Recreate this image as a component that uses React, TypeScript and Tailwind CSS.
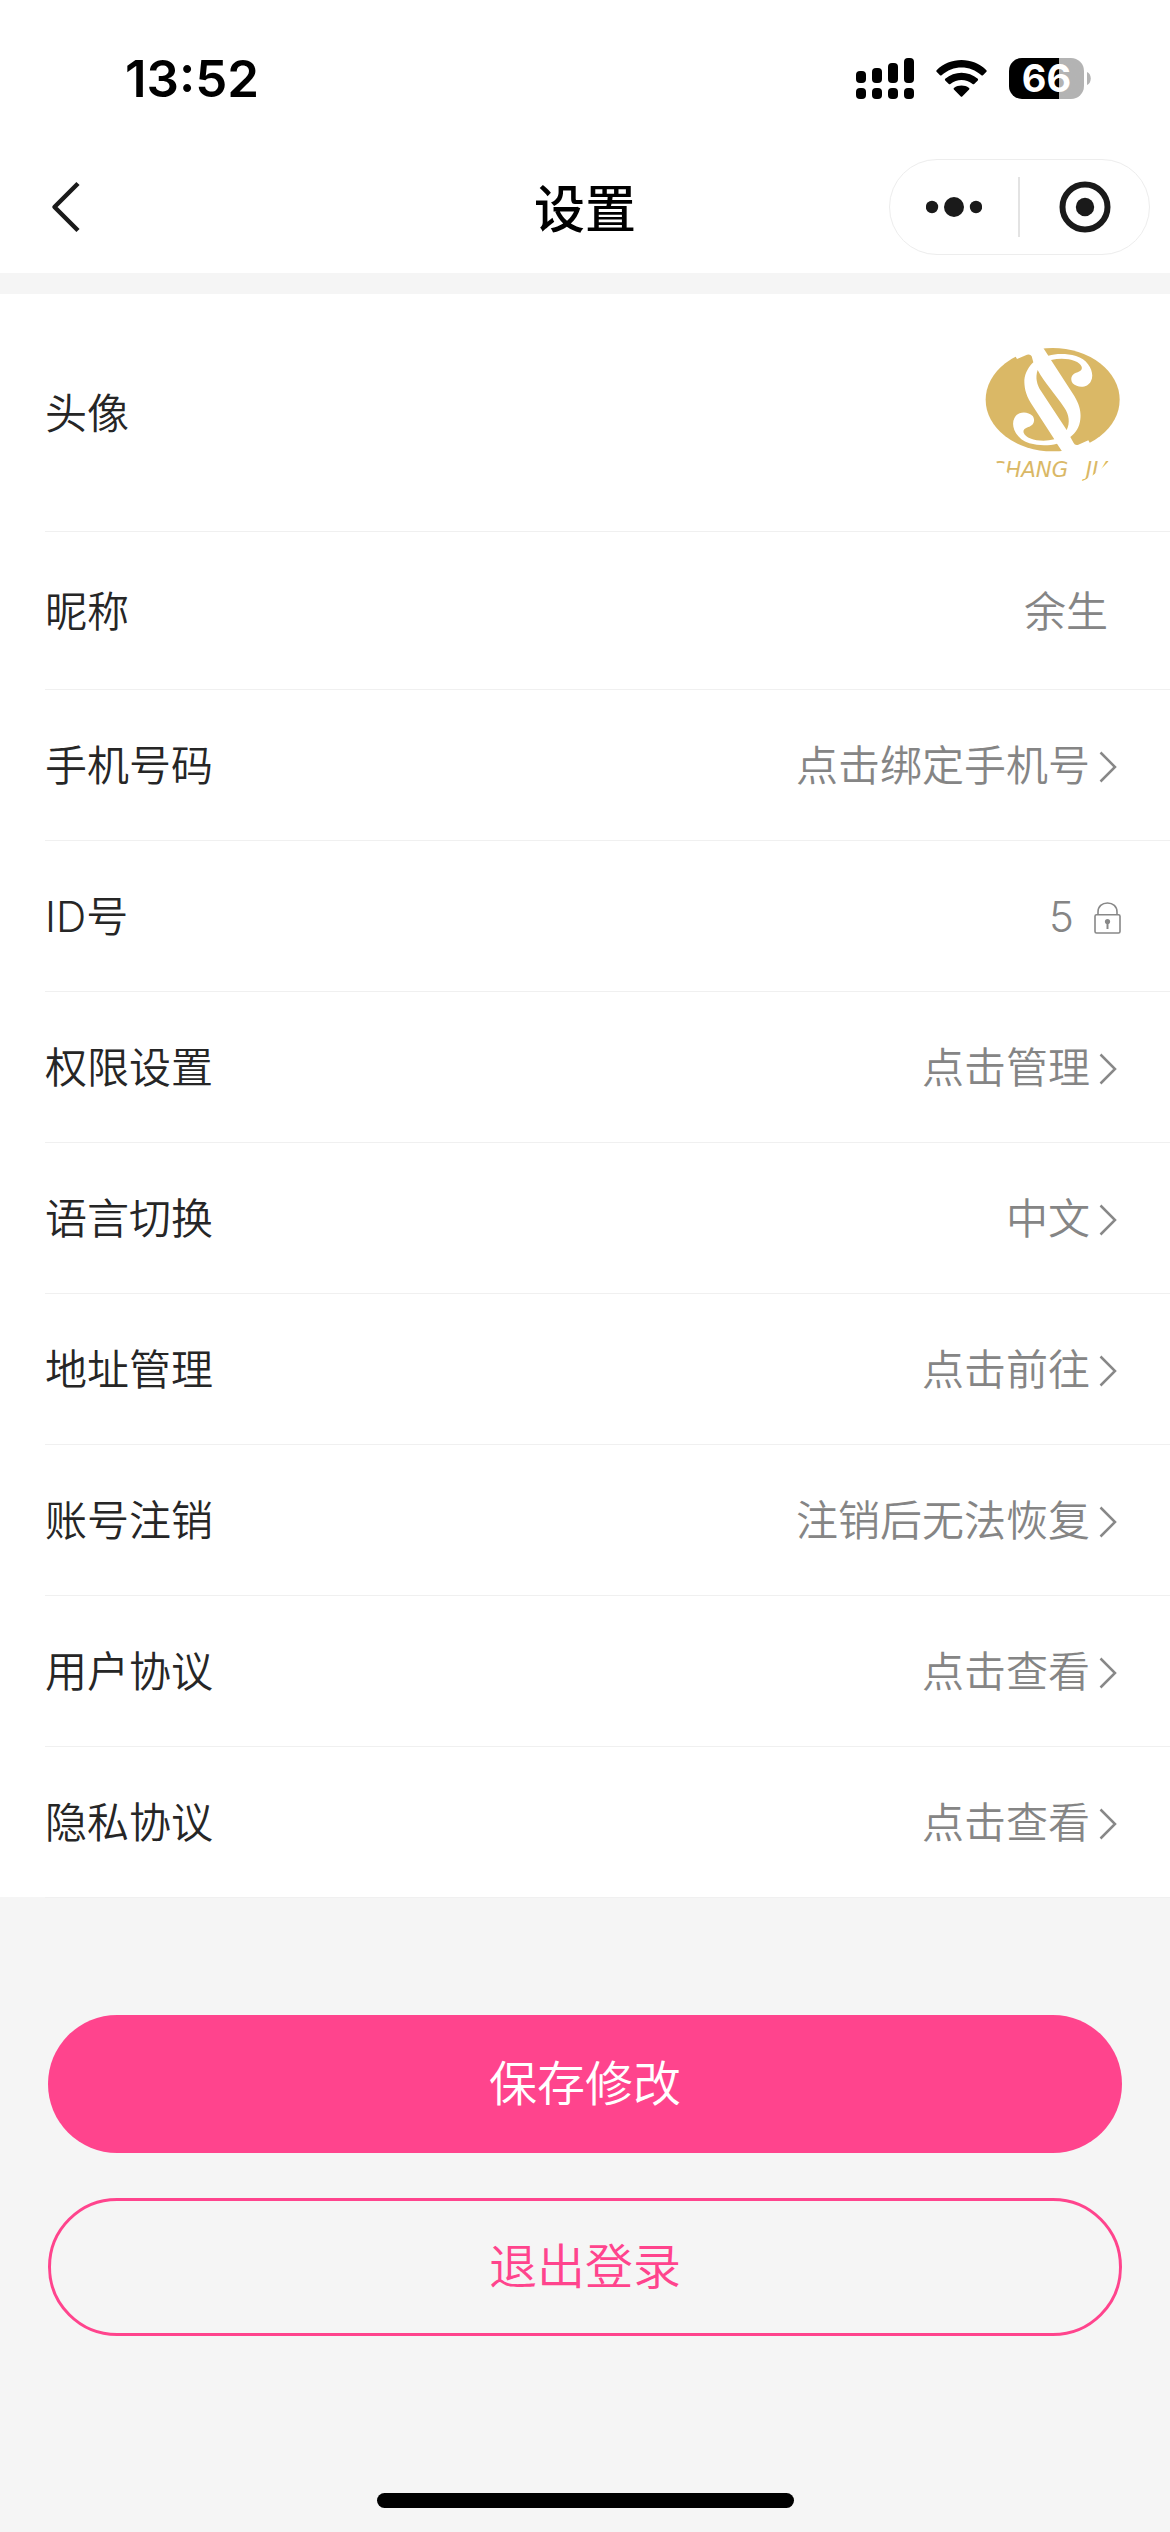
import React, { useState } from "react";

interface LinkRow {
  label: string;
  value: string;
}

const accountRows: LinkRow[] = [
  { label: "权限设置", value: "点击管理" },
  { label: "语言切换", value: "中文" },
  { label: "地址管理", value: "点击前往" },
  { label: "账号注销", value: "注销后无法恢复" },
  { label: "用户协议", value: "点击查看" },
  { label: "隐私协议", value: "点击查看" },
];

const rowClass =
  "flex w-full items-center justify-between border-b border-[#f0f0f0] pt-[2px] text-left";

const StatusBar = () => (
  <div className="flex h-[156px] items-center justify-between pr-[79px] pl-[125px]">
    <span className="text-[51px] leading-none font-semibold text-black">13:52</span>
    <div className="flex items-center gap-[22px]">
      <svg className="h-[41px] w-[58px]" viewBox="0 0 58 41" fill="#000">
        <rect x="0" y="13" width="10" height="12" rx="4" />
        <rect x="16" y="10" width="10" height="15" rx="4" />
        <rect x="32" y="5" width="10" height="20" rx="4" />
        <rect x="48" y="0" width="10" height="25" rx="4" />
        <rect x="0" y="30" width="10" height="11" rx="4" />
        <rect x="16" y="30" width="10" height="11" rx="4" />
        <rect x="32" y="30" width="10" height="11" rx="4" />
        <rect x="48" y="30" width="10" height="11" rx="4" />
      </svg>
      <svg className="h-[37px] w-[51px]" viewBox="0 0 51 37" fill="#000">
        <path d="M0.6 10.2C14-3.4 37-3.4 50.4 10.2Q51 11 50.4 11.8L47 15.2Q46.2 15.9 45.4 15.2C34 4.8 17 4.8 5.6 15.2Q4.8 15.9 4 15.2L0.6 11.8Q0 11 0.6 10.2Z" />
        <path d="M9.2 18.8C18.5 10.8 32.5 10.8 41.8 18.8Q42.5 19.6 41.8 20.4L38.2 24Q37.4 24.6 36.6 24C30 18.6 21 18.6 14.4 24Q13.6 24.6 12.8 24L9.2 20.4Q8.5 19.6 9.2 18.8Z" />
        <path d="M17.9 28C22.5 24.8 28.5 24.8 33.1 28Q33.8 28.7 33.1 29.4L26.2 36.4Q25.5 37 24.8 36.4L17.9 29.4Q17.2 28.7 17.9 28Z" />
      </svg>
      <div className="flex items-center gap-[3px]">
        <div className="flex h-[41px] w-[75px] items-center justify-center rounded-[13px] bg-linear-to-r from-black from-67% to-[#b3b3b3] to-67%">
          <span className="text-[38px] leading-none font-bold text-white">66</span>
        </div>
        <svg className="h-[13px] w-[4px]" viewBox="0 0 4 13" fill="#b3b3b3">
          <path d="M0 0C5 2 5 11 0 13Z" />
        </svg>
      </div>
    </div>
  </div>
);

const NavBar = () => (
  <header className="grid h-[117px] grid-cols-3 items-start pr-[20px] pl-[50px]">
    <button aria-label="返回" className="flex h-[102px] w-[60px] items-center">
      <svg className="h-[52px] w-[32px]" viewBox="0 0 32 52" fill="none" stroke="#1a1a1a" strokeWidth="4.5" strokeLinejoin="round">
        <path d="M28 2.5L4.5 26L28 49.5" />
      </svg>
    </button>
    <h1 className="justify-self-center pr-[30px] text-center text-[51px] leading-[107px] font-medium whitespace-nowrap text-black">
      设置
    </h1>
    <div className="mt-[3px] flex h-[96px] w-[261px] items-center justify-self-end rounded-full border border-[#ededed]">
      <button aria-label="更多" className="flex h-full flex-1 items-center justify-center">
        <svg className="h-[20px] w-[56px]" viewBox="0 0 56 20" fill="#1a1a1a">
          <circle cx="6" cy="10" r="6.2" />
          <circle cx="28" cy="10" r="10" />
          <circle cx="50" cy="10" r="6.2" />
        </svg>
      </button>
      <span className="h-[60px] w-[2px] bg-[#e3e3e3]" />
      <button aria-label="关闭" className="flex h-full flex-1 items-center justify-center">
        <svg className="h-[52px] w-[52px]" viewBox="0 0 52 52">
          <circle cx="26" cy="26" r="22.5" fill="none" stroke="#1a1a1a" strokeWidth="6" />
          <circle cx="26" cy="26" r="9.2" fill="#1a1a1a" />
        </svg>
      </button>
    </div>
  </header>
);

const Avatar = () => (
  <svg className="h-[144px] w-[144px]" viewBox="57 33 432 432" role="img" aria-label="头像">
    <defs>
      <clipPath id="round">
        <circle cx="273" cy="249" r="221" />
      </clipPath>
    </defs>
    <g clipPath="url(#round)">
      <ellipse cx="275" cy="206" rx="201" ry="155" fill="#dab866" />
      {/* double S cut out of the coin */}
      <path
        fill="#fff"
        d="M247 51L262 74C285 68 315 67 345 75C385 87 402 127 390 150C380 172 350 172 335 157C326 144 332 129 345 125C355 122 365 118 362 107C355 87 310 77 270 87L340 195C358 225 360 245 358 265C355 290 345 305 328 318L338 336Q342 344 352 341L382 328L390 342L350 382L303 382L303 361L288 338C265 344 235 345 205 337C165 325 148 285 160 262C170 240 200 240 215 255C224 268 218 283 205 287C195 290 185 294 188 305C195 325 240 335 280 325L210 217C192 187 190 167 190 147C192 125 205 105 217 94L212 76Q208 68 198 71L168 84L160 70L200 30L247 30Z"
      />
      <path
        fill="#dab866"
        d="M230 117C222 140 228 162 240 180L317 297C328 275 324 250 310 230C282 188 250 155 230 117Z"
      />
      <text y="438" fill="#dab866" fontFamily="'DejaVu Sans', sans-serif" fontSize="64" fontStyle="italic">
        <tspan x="92">SHANG</tspan>
        <tspan x="374">JIA</tspan>
      </text>
    </g>
  </svg>
);

const Chevron = () => (
  <svg className="mt-[2px] h-[32px] w-[18px]" viewBox="0 0 18 32" fill="none" stroke="#888" strokeWidth="2.5">
    <path d="M1.5 1.5L16 16L1.5 30.5" />
  </svg>
);

const Lock = () => (
  <svg className="mt-[2px] h-[32px] w-[27px]" viewBox="0 0 27 32" fill="none" stroke="#888" strokeWidth="1.6">
    <rect x="1" y="12.8" width="25" height="18.2" rx="1.5" />
    <path d="M4 12.8V10C4 4.5 8 1 13.5 1S23 4.5 23 10V12.8" />
    <circle cx="13.5" cy="19.5" r="2.6" fill="#888" stroke="none" />
    <path d="M13.5 20V27" strokeWidth="2" />
  </svg>
);

const SettingLink = ({ label, value }: LinkRow) => (
  <li>
    <button className={`${rowClass} h-[151px] pr-[53px]`}>
      <span>{label}</span>
      <span className="flex items-center gap-[9px] text-[#858585]">
        {value}
        <Chevron />
      </span>
    </button>
  </li>
);

const App = () => {
  const [nickname, setNickname] = useState("余生");

  return (
    <div className="flex min-h-screen flex-col bg-[#f5f5f5] font-[Inter,'Noto_Sans_CJK_SC',sans-serif]">
      <div className="bg-white">
        <StatusBar />
        <NavBar />
      </div>

      {/* Settings list */}
      <main className="mt-[21px] bg-white pl-[45px] text-[42px] leading-[60px] font-[350] text-[#262626]">
        <ul className="-mb-px">
          <li className={`${rowClass} h-[238px] pr-[46px]`}>
            <span>头像</span>
            <Avatar />
          </li>
          <li className={`${rowClass} h-[158px] pr-[62px]`}>
            <label htmlFor="nickname">昵称</label>
            <input
              id="nickname"
              type="text"
              value={nickname}
              onChange={(e) => setNickname(e.target.value)}
              className="min-w-0 flex-1 bg-transparent text-right text-[#858585] outline-none"
            />
          </li>
          <SettingLink label="手机号码" value="点击绑定手机号" />
          <li className={`${rowClass} h-[151px] pr-[49px]`}>
            <span>ID号</span>
            <span className="flex items-center gap-[20px] text-[#858585]">
              5
              <Lock />
            </span>
          </li>
          {accountRows.map((row) => (
            <SettingLink key={row.label} label={row.label} value={row.value} />
          ))}
        </ul>
      </main>

      {/* Actions */}
      <div className="mt-[118px] flex flex-col gap-[45px] px-[48px] text-[48px] leading-none font-[350]">
        <button className="h-[138px] rounded-full bg-[#ff448d] text-white">保存修改</button>
        <button className="h-[138px] rounded-full border-3 border-[#ff448d] text-[#ff448d]">
          退出登录
        </button>
      </div>

      <div className="mx-auto mt-auto mb-[24px] h-[15px] w-[417px] rounded-full bg-black" />
    </div>
  );
};

export default App;
